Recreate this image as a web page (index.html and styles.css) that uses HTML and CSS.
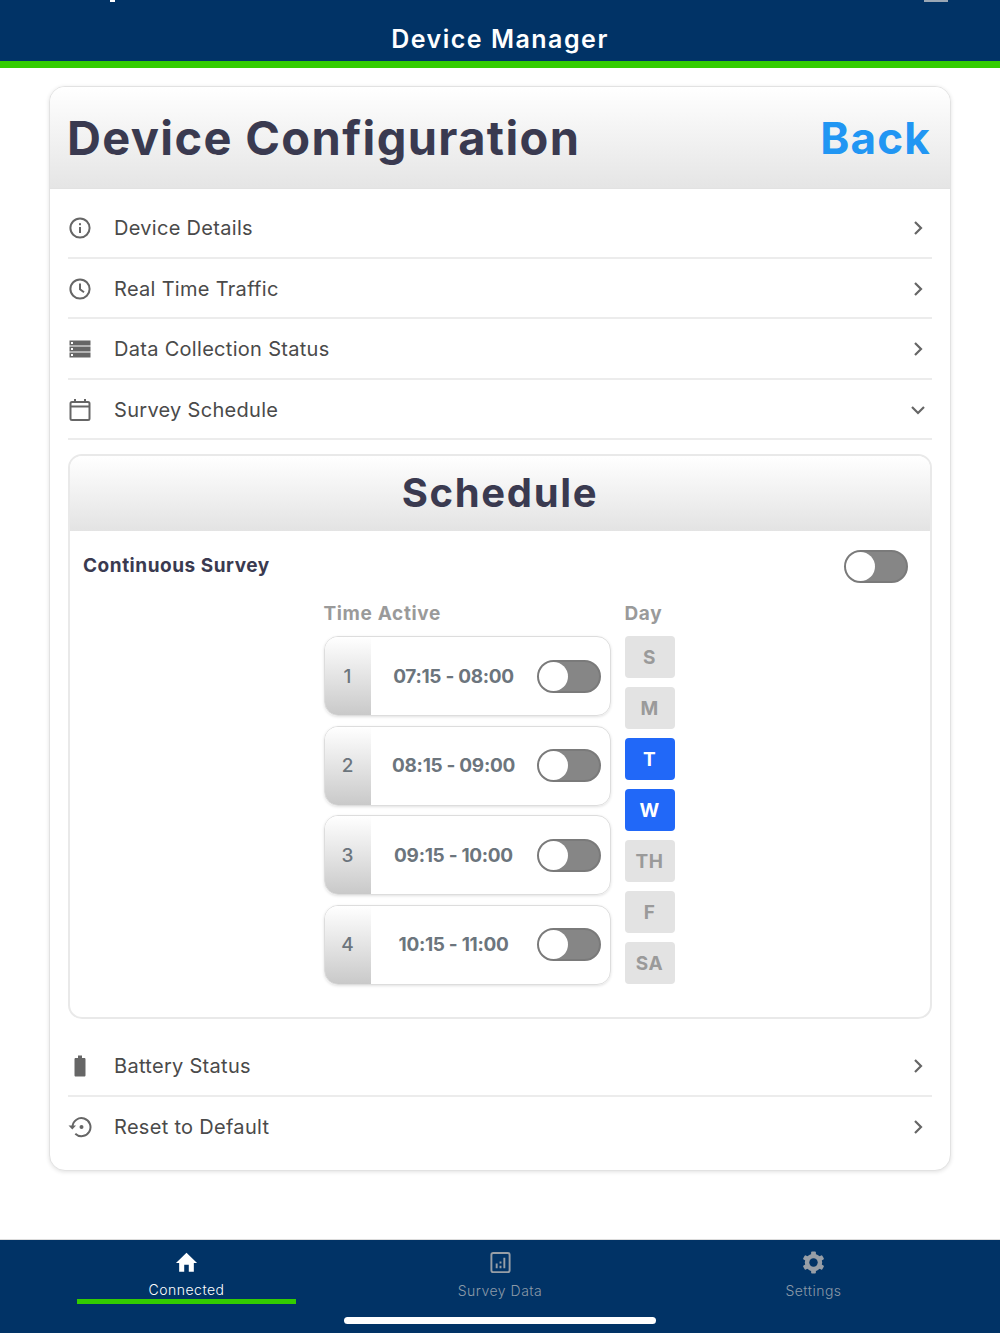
FILE: index.html
```html
<!DOCTYPE html>
<html lang="en">
<head>
  <meta charset="UTF-8" />
  <title>Device Manager</title>
  <link rel="stylesheet" href="styles.css">
</head>
<body>

  <div class="app">
    <header class="top-bar">
      <span class="status-tick"></span>
      <span class="status-battery"></span>
      <h1 class="top-title">Device Manager</h1>
    </header>

    <main class="content">
      <section class="card">
        <div class="card-head">
          <h2 class="card-title">Device Configuration</h2>
          <span class="back-link">Back</span>
        </div>

        <div class="menu menu-top">
          <div class="menu-row">
            <svg class="menu-icon" viewBox="0 0 24 24"><circle cx="12" cy="12" r="9.6" fill="none" stroke="#666" stroke-width="2"/><rect x="11" y="11" width="2" height="6" fill="#666"/><rect x="11" y="7.2" width="2" height="2" fill="#666"/></svg>
            <span class="menu-label">Device Details</span>
            <svg class="chevron" viewBox="0 0 16 16"><path d="M5 2l6 6-6 6" /></svg>
          </div>
          <div class="menu-row">
            <svg class="menu-icon" viewBox="0 0 24 24"><circle cx="12" cy="12" r="9.6" fill="none" stroke="#666" stroke-width="2"/><path d="M12 6.500V12.300l4 3" fill="none" stroke="#666" stroke-width="2"/></svg>
            <span class="menu-label">Real Time Traffic</span>
            <svg class="chevron" viewBox="0 0 16 16"><path d="M5 2l6 6-6 6" /></svg>
          </div>
          <div class="menu-row">
            <svg class="menu-icon" viewBox="0 0 24 24"><path fill="#666" fill-rule="evenodd" d="M1.500 3.500h21v5h-21zM3 5v2h2V5zM1.500 9.500h21v5h-21zM3 11v2h2v-2zM1.500 15.500h21v5h-21zM3 17v2h2v-2z"/></svg>
            <span class="menu-label">Data Collection Status</span>
            <svg class="chevron" viewBox="0 0 16 16"><path d="M5 2l6 6-6 6" /></svg>
          </div>
          <div class="menu-row">
            <svg class="menu-icon" viewBox="0 0 24 24"><rect x="2.500" y="4" width="19" height="18" rx="1.500" fill="none" stroke="#666" stroke-width="2"/><path d="M2.500 8.500h19M7 1v4M17 1v4" fill="none" stroke="#666" stroke-width="2"/></svg>
            <span class="menu-label">Survey Schedule</span>
            <svg class="chevron" viewBox="0 0 16 16"><path d="M2 5l6 6 6-6" /></svg>
          </div>
        </div>

        <section class="schedule">
          <h3 class="schedule-head">Schedule</h3>
          <div class="continuous">
            <span class="continuous-label">Continuous Survey</span>
            <span class="toggle"></span>
          </div>

          <div class="planner">
            <div class="slots">
              <div class="col-label">Time Active</div>
              <div class="slot">
                <span class="slot-num">1</span>
                <span class="slot-time">07:15 - 08:00</span>
                <span class="toggle"></span>
              </div>
              <div class="slot">
                <span class="slot-num">2</span>
                <span class="slot-time">08:15 - 09:00</span>
                <span class="toggle"></span>
              </div>
              <div class="slot">
                <span class="slot-num">3</span>
                <span class="slot-time">09:15 - 10:00</span>
                <span class="toggle"></span>
              </div>
              <div class="slot">
                <span class="slot-num">4</span>
                <span class="slot-time">10:15 - 11:00</span>
                <span class="toggle"></span>
              </div>
            </div>
            <div class="days">
              <div class="col-label">Day</div>
              <div class="day">S</div>
              <div class="day">M</div>
              <div class="day active">T</div>
              <div class="day active">W</div>
              <div class="day">TH</div>
              <div class="day">F</div>
              <div class="day">SA</div>
            </div>
          </div>
        </section>

        <div class="menu">
          <div class="menu-row">
            <svg class="menu-icon" viewBox="0 0 24 24"><path fill="#666" d="M10 1.500h4V4h2.200c.8 0 1.300.5 1.300 1.300v16c0 .8-.5 1.300-1.300 1.300H7.800c-.8 0-1.300-.5-1.300-1.300v-16C6.500 4.500 7 4 7.800 4H10z"/></svg>
            <span class="menu-label">Battery Status</span>
            <svg class="chevron" viewBox="0 0 16 16"><path d="M5 2l6 6-6 6" /></svg>
          </div>
          <div class="menu-row">
            <svg class="menu-icon" viewBox="0 0 24 24"><path d="M4.500 11.500a9 9 0 1 1 2.800 7.200" fill="none" stroke="#666" stroke-width="2"/><path d="M0.500 10.500h7.500l-3.700 4z" fill="#666"/><circle cx="13.500" cy="12" r="2" fill="#666"/></svg>
            <span class="menu-label">Reset to Default</span>
            <svg class="chevron" viewBox="0 0 16 16"><path d="M5 2l6 6-6 6" /></svg>
          </div>
        </div>
      </section>
    </main>

    <nav class="tab-bar">
      <div class="tabs">
        <div class="tab active">
          <svg class="tab-icon" viewBox="0 0 24 24"><path fill="#fff" d="M12 2 23.500 13H20v9.500h-5.500V15h-5v7.500H4V13H.5z"/></svg>
          <span class="tab-label">Connected</span>
        </div>
        <div class="tab">
          <svg class="tab-icon" viewBox="0 0 24 24"><rect x="2.500" y="2" width="19" height="20" rx="2" fill="none" stroke="#979ea6" stroke-width="2"/><path fill="#979ea6" d="M7 13h2v5H7zM11 11h2v2h-2zM11 15.500h2V18h-2zM15 7h2v11h-2z"/></svg>
          <span class="tab-label">Survey Data</span>
        </div>
        <div class="tab">
          <svg class="tab-icon" viewBox="0 0 24 24">
            <circle cx="12" cy="12" r="6.800" fill="none" stroke="#979ea6" stroke-width="4.600"/>
            <g fill="#979ea6">
              <rect x="9.500" y="0.500" width="5" height="23" rx="1"/>
              <rect x="9.500" y="0.500" width="5" height="23" rx="1" transform="rotate(60 12 12)"/>
              <rect x="9.500" y="0.500" width="5" height="23" rx="1" transform="rotate(120 12 12)"/>
            </g>
            <circle cx="12" cy="12" r="4.400" fill="#013366"/>
          </svg>
          <span class="tab-label">Settings</span>
        </div>
      </div>
      <div class="home-bar"></div>
    </nav>
  </div>

</body>
</html>
```

FILE: styles.css
```css
* {
  box-sizing: border-box;
}

body {
  margin: 0;
  background-color: #fff;
  font-family: "Inter", "Liberation Sans", sans-serif;
}

.app {
  width: 1000px;
  height: 1333px;
  display: flex;
  flex-direction: column;
  overflow: hidden;
}

/* top bar */
.top-bar {
  position: relative;
  height: 68px;
  flex-shrink: 0;
  background-color: #013366;
  border-bottom: 7px solid #33cc00;
  display: flex;
  align-items: flex-end;
  justify-content: center;
}

.status-tick {
  position: absolute;
  top: 0;
  left: 110px;
  width: 5px;
  height: 2px;
  background-color: #fff;
}

.status-battery {
  position: absolute;
  top: 0;
  left: 924px;
  width: 24px;
  height: 2px;
  background-color: #9aa7b5;
}

.top-title {
  margin: 0 0 6px;
  color: #fff;
  font-size: 25px;
  line-height: 32px;
  font-weight: 600;
  letter-spacing: 1.5px;
}

.content {
  flex: 1;
  padding: 18px 49px 0;
}

.card {
  height: 1085px;
  background-color: #fff;
  border: 1px solid #e2e2e2;
  border-radius: 16px;
  box-shadow: 0 1px 4px rgba(0,0,0,0.12);
  overflow: hidden;
}

.card-head {
  height: 102px;
  padding: 0 19px 0 17px;
  display: flex;
  align-items: center;
  justify-content: space-between;
  background: linear-gradient(#fff, #e5e5e5);
  border-bottom: 1px solid #e2e2e2;
}

.card-title {
  margin: 0;
  color: #3a3a50;
  font-size: 47px;
  font-weight: 700;
  letter-spacing: 1.35px;
}

.back-link {
  color: #2196f3;
  font-size: 44px;
  font-weight: 700;
  letter-spacing: 1.2px;
}

.menu {
  padding: 0 18px;
}

.menu-top {
  padding-top: 9px;
}

.menu-row {
  height: 60.500px;
  padding-top: 2px;
  display: flex;
  align-items: center;
  border-bottom: 2px solid #ececec;
}

.menu:last-child .menu-row:last-child {
  padding-top: 0;
  border-bottom: none;
}

.menu-icon {
  width: 24px;
  height: 24px;
  margin-right: 22px;
  flex-shrink: 0;
}

.menu-label {
  flex: 1;
  color: #4a4a4a;
  font-size: 20px;
  letter-spacing: 0.3px;
}

.chevron {
  width: 16px;
  height: 16px;
  margin-right: 6px;
  fill: none;
  stroke: #666;
  stroke-width: 2.2;
}

/* schedule panel */
.schedule {
  margin: 14px 18px 17px;
  height: 565px;
  border: 2px solid #e9e9e9;
  border-radius: 14px;
  overflow: hidden;
}

.schedule-head {
  margin: 0;
  height: 75px;
  line-height: 73px;
  text-align: center;
  color: #3a3a50;
  font-size: 40px;
  font-weight: 700;
  letter-spacing: 1.65px;
  background: linear-gradient(#fff, #e3e3e3);
}

.continuous {
  height: 68px;
  padding: 0 22px 0 13px;
  display: flex;
  align-items: center;
  justify-content: space-between;
}

.continuous .toggle {
  margin-top: 2px;
}

.continuous-label {
  color: #3a3a50;
  font-size: 19px;
  font-weight: 700;
  letter-spacing: 0.53px;
}

.toggle {
  position: relative;
  width: 64px;
  height: 33px;
  flex-shrink: 0;
  border-radius: 17px;
  background-color: #868686;
  border: 2px solid #7a7a7a;
}

.toggle::after {
  content: "";
  position: absolute;
  top: 0;
  left: 0;
  width: 29px;
  height: 29px;
  border-radius: 50%;
  background-color: #fff;
}

.planner {
  display: flex;
  justify-content: center;
  gap: 14px;
  padding-right: 2px;
}

.col-label {
  height: 37px;
  color: #9a9a9a;
  font-size: 19px;
  font-weight: 700;
  line-height: 30px;
  letter-spacing: 0.64px;
}

.slots {
  width: 287px;
}

.slot {
  height: 80px;
  margin-bottom: 9.500px;
  display: flex;
  align-items: center;
  padding-right: 9px;
  border: 1px solid #ddd;
  border-radius: 14px;
  box-shadow: 0 1px 3px rgba(0,0,0,0.12);
  overflow: hidden;
}

.slot-num {
  width: 46px;
  height: 100%;
  flex-shrink: 0;
  display: flex;
  align-items: center;
  justify-content: center;
  color: #6c757d;
  font-size: 19px;
  font-weight: 500;
  background: linear-gradient(#fff, #c9c9c9);
}

.slot-time {
  flex: 1;
  text-align: center;
  color: #6c757d;
  font-size: 19px;
  font-weight: 700;
  letter-spacing: -0.3px;
  white-space: nowrap;
}

.days {
  width: 50px;
  display: flex;
  flex-direction: column;
}

.day {
  height: 42px;
  margin-bottom: 9px;
  display: flex;
  align-items: center;
  justify-content: center;
  color: #9a9a9a;
  font-size: 19px;
  font-weight: 700;
  letter-spacing: 0.5px;
  background-color: #e3e3e3;
  border-radius: 4px;
}

.day.active {
  color: #fff;
  background-color: #2168f8;
}

/* bottom tabs */
.tab-bar {
  height: 94px;
  flex-shrink: 0;
  background-color: #013366;
  border-top: 1px solid #dcdcdc;
}

.tabs {
  display: grid;
  grid-template-columns: repeat(3, 219px);
  padding: 0 77px;
  column-gap: 94.500px;
}

.tab {
  height: 64px;
  padding-top: 11px;
  display: flex;
  flex-direction: column;
  align-items: center;
  color: #8c9aa8;
}

.tab.active {
  color: #fff;
  border-bottom: 5px solid #33cc00;
}

.tab-icon {
  width: 23px;
  height: 23px;
}

.tab-label {
  margin-top: 8px;
  font-size: 14px;
  font-weight: 300;
  line-height: 18px;
  letter-spacing: 0.5px;
}

.home-bar {
  width: 312px;
  height: 7px;
  margin: 13px auto 0;
  border-radius: 4px;
  background-color: #fff;
}
```
